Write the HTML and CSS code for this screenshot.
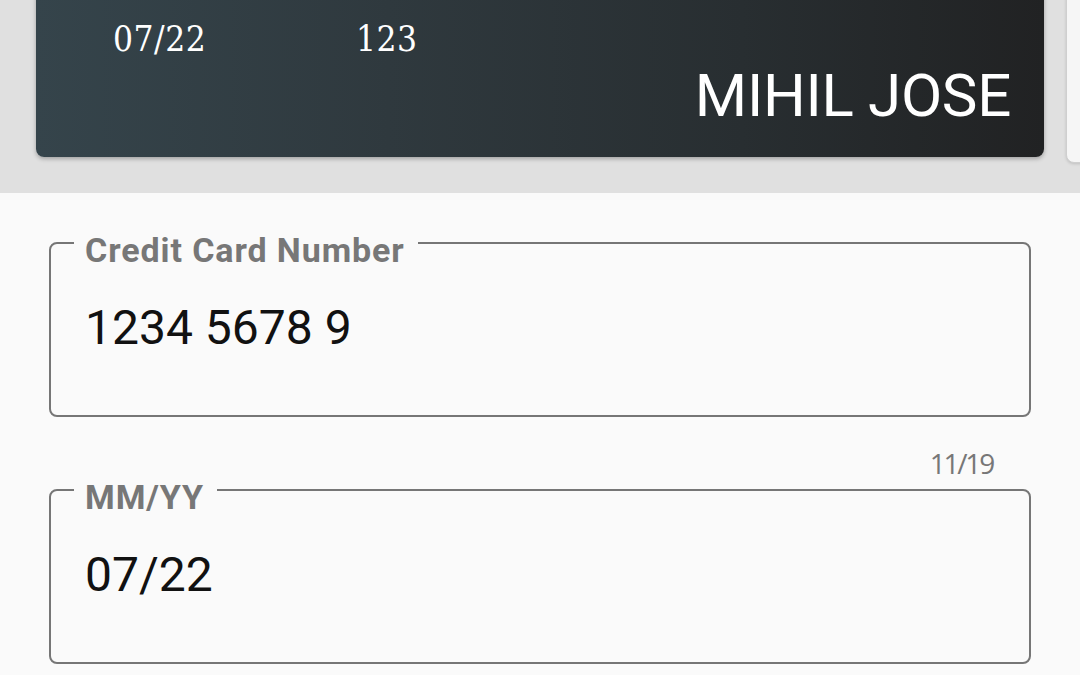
FILE: index.html
```html
<!DOCTYPE html>
<html lang="en">
<head>
<meta charset="utf-8">
<title>Card form</title>
<link rel="stylesheet" href="styles.css">
</head>
<body>
<div class="cards">
  <div class="card">
    <div class="card-meta">
      <span class="card-exp">07/22</span>
      <span class="card-cvv">123</span>
    </div>
    <div class="card-name">MIHIL JOSE</div>
  </div>
  <div class="card card-next"></div>
</div>
<div class="form">
  <fieldset class="field">
    <legend class="field-label">Credit Card Number</legend>
    <div class="field-value">1234 5678 9</div>
  </fieldset>
  <div class="counter">11/19</div>
  <fieldset class="field">
    <legend class="field-label">MM/YY</legend>
    <div class="field-value">07/22</div>
  </fieldset>
</div>
</body>
</html>
```
FILE: styles.css
```css
html, body {
  margin: 0;
  padding: 0;
  background: #fafafa;
  font-family: Roboto, "Liberation Sans", sans-serif;
}

.cards {
  height: 193px;
  background: #e0e0e0;
  display: flex;
  align-items: flex-start;
  gap: 22px;
  padding-left: 36px;
  overflow: hidden;
  box-sizing: border-box;
}

.card {
  flex: none;
  width: 1008px;
  height: 200px;
  margin-top: -43px;
  border-radius: 8px;
  background: linear-gradient(to right, #35444b 0%, #2f393e 35%, #282e31 70%, #212223 100%);
  box-shadow: 0 2px 4px rgba(0, 0, 0, 0.28);
  display: flex;
  flex-direction: column;
  justify-content: flex-end;
  padding: 0 33px 31px 77px;
  box-sizing: border-box;
  color: #fff;
}

.card-next {
  width: 300px;
  height: 203px;
  margin-top: -40px;
  background: #f6f6f6;
  border: 1px solid #cfcfcf;
  box-shadow: 0 1px 3px rgba(0, 0, 0, 0.15);
  padding: 0;
}

.card-meta {
  display: flex;
  font-family: "DejaVu Serif Condensed", "DejaVu Serif", serif;
  font-size: 35px;
  line-height: 38px;
  margin-bottom: 8px;
  letter-spacing: 0.5px;
}

.card-exp {
  flex: none;
  width: 243px;
}

.card-name {
  font-size: 60px;
  line-height: 60px;
  text-align: right;
  letter-spacing: -0.3px;
}

.form {
  padding: 33px 49px 0 49px;
}

.field {
  margin: 0;
  padding: 0 23px 63px 23px;
  border: 2px solid #767676;
  border-radius: 8px;
  min-width: 0;
}

.field-label {
  padding: 14px 13px 0 11px;
  font-size: 34px;
  line-height: 20px;
  font-weight: 700;
  letter-spacing: 0.9px;
  color: #777;
}

.field-value {
  margin-top: 44px;
  padding-left: 11px;
  font-size: 48px;
  line-height: 48px;
  color: #111;
}

.counter {
  margin-top: 37px;
  padding-right: 38px;
  text-align: right;
  font-family: "Open Sans", sans-serif;
  font-size: 28px;
  line-height: 19px;
  letter-spacing: -2.2px;
  color: #777;
}
```
